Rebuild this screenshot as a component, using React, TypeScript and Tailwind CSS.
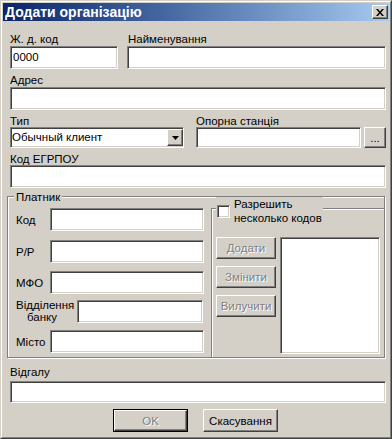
const sunken =
  "bg-white border border-t-[#808080] border-l-[#808080] border-b-white border-r-white shadow-[inset_1px_1px_0_#404040,inset_-1px_-1px_0_#d4d0c8]";
const raised =
  "bg-[#d4d0c8] border border-t-white border-l-white border-b-[#404040] border-r-[#404040] shadow-[inset_-1px_-1px_0_#808080]";
const disabledText = "text-[#808080] [text-shadow:1px_1px_0_#fff]";

function Field({ className = "", value = "" }: { className?: string; value?: string }) {
  return (
    <div className={`${sunken} h-[23px] pl-[2px] leading-[21px] ${className}`}>{value}</div>
  );
}

function PayerRow({ label, mt }: { label: string; mt: string }) {
  return (
    <div className={`flex items-center ${mt}`}>
      <div className="w-[34px]">{label}</div>
      <Field className="w-[154px]" />
    </div>
  );
}

export default function App() {
  return (
    <div className="w-[392px] h-[439px] bg-[#d4d0c8] border border-t-[#d4d0c8] border-l-[#d4d0c8] border-b-[#404040] border-r-[#404040] font-['Liberation_Sans',Arial,sans-serif] text-[11.5px] leading-[14px] text-black">
      <div className="h-full border border-t-white border-l-white border-b-[#808080] border-r-[#808080] p-px flex flex-col">
        {/* title bar */}
        <div className="h-[18px] flex items-center pl-[2px] pr-[1px] bg-gradient-to-r from-[#0a246a] to-[#a6caf0]">
          <span className="text-white font-bold text-[14px] leading-[18px]">Додати організацію</span>
          <div className={`${raised} ml-auto w-[16px] h-[14px] flex items-center justify-center`}>
            <svg width="8" height="7" viewBox="0 0 8 7">
              <path d="M0 0h2l2 2.5L6 0h2L5 3.5 8 7H6L4 4.5 2 7H0l3-3.5z" fill="#000" />
            </svg>
          </div>
        </div>

        <div className="flex flex-col pl-[4px] pr-[3px]">
          {/* code + name */}
          <div className="flex ml-[3px] mt-[11px]">
            <div className="w-[108px]">
              <div className="h-[14px]">Ж. д. код</div>
              <Field value="0000" />
            </div>
            <div className="ml-[9px] flex-1">
              <div className="h-[14px] pl-px">Найменування</div>
              <Field />
            </div>
          </div>

          {/* address */}
          <div className="ml-[3px] mt-[4px]">
            <div className="h-[14px]">Адрес</div>
            <Field />
          </div>

          {/* type + station */}
          <div className="flex ml-[3px] mt-[4px]">
            <div className="w-[174px]">
              <div className="h-[13px]">Тип</div>
              <div className={`${sunken} h-[21px] flex items-center`}>
                <span className="flex-1 pl-[1px] leading-[17px] whitespace-nowrap">Обычный клиент</span>
                <div className={`${raised} w-[16px] h-[17px] flex items-center justify-center`}>
                  <svg width="7" height="4" viewBox="0 0 7 4">
                    <path d="M0 0h7L3.5 4z" fill="#000" />
                  </svg>
                </div>
              </div>
            </div>
            <div className="ml-[12px]">
              <div className="h-[13px]">Опорна станція</div>
              <div className="flex">
                <div className={`${sunken} w-[165px] h-[21px]`} />
                <div className={`${raised} ml-[3px] w-[22px] h-[21px] flex items-center justify-center leading-[12px]`}>
                  ...
                </div>
              </div>
            </div>
          </div>

          {/* EGRPOU */}
          <div className="ml-[3px] mt-[4px]">
            <div className="h-[13px]">Код ЕГРПОУ</div>
            <Field />
          </div>

          {/* payer group */}
          <div className="relative mt-[8px] w-[378px] h-[162px] border border-[#808080] shadow-[1px_1px_0_#fff,inset_1px_1px_0_#fff] flex">
            <span className="absolute left-[6px] top-[-7px] px-[2px] bg-[#d4d0c8]">Платник</span>

            <div className="w-[203px] pl-[8px] flex flex-col">
              <PayerRow label="Код" mt="mt-[11px]" />
              <PayerRow label="Р/Р" mt="mt-[9px]" />
              <PayerRow label="МФО" mt="mt-[8px]" />
              <div className="flex items-center mt-[5px]">
                <div className="w-[52px] text-center leading-[12px]">
                  Відділення
                  <br />
                  банку
                </div>
                <Field className="ml-[9px] w-[126px]" />
              </div>
              <PayerRow label="Місто" mt="mt-[7px]" />
            </div>

            <div className="relative flex-1 mt-[11px] border-l border-t border-[#808080] shadow-[inset_1px_1px_0_#fff]">
              <div className="absolute left-[4px] top-[-12px] w-[107px] bg-[#d4d0c8] flex">
                <div className={`${sunken} mt-[8px] ml-px w-[13px] h-[13px] shrink-0`} />
                <div className="ml-[4px] whitespace-nowrap">
                  Разрешить
                  <br />
                  несколько кодов
                </div>
              </div>

              <div className="flex pl-[4px] pt-[28px]">
                <div className="flex flex-col gap-[7px]">
                  <div className={`${raised} ${disabledText} w-[60px] h-[22px] flex items-center justify-center`}>Додати</div>
                  <div className={`${raised} ${disabledText} w-[60px] h-[22px] flex items-center justify-center`}>Змінити</div>
                  <div className={`${raised} ${disabledText} w-[60px] h-[22px] flex items-center justify-center`}>Вилучити</div>
                </div>
                <div className={`${sunken} ml-[4px] w-[100px] h-[117px]`} />
              </div>
            </div>
          </div>

          {/* branch */}
          <div className="ml-[3px] mt-[7px]">
            <div className="h-[16px]">Відгалу</div>
            <div className={`${sunken} h-[22px]`} />
          </div>

          {/* buttons */}
          <div className="flex pl-[106px] mt-[6px] gap-[15px]">
            <div className="w-[75px] h-[23px] border border-black">
              <div className={`${raised} ${disabledText} h-full flex items-center justify-center`}>OK</div>
            </div>
            <div className={`${raised} w-[75px] h-[23px] flex items-center justify-center`}>Скасування</div>
          </div>
        </div>
      </div>
    </div>
  );
}
